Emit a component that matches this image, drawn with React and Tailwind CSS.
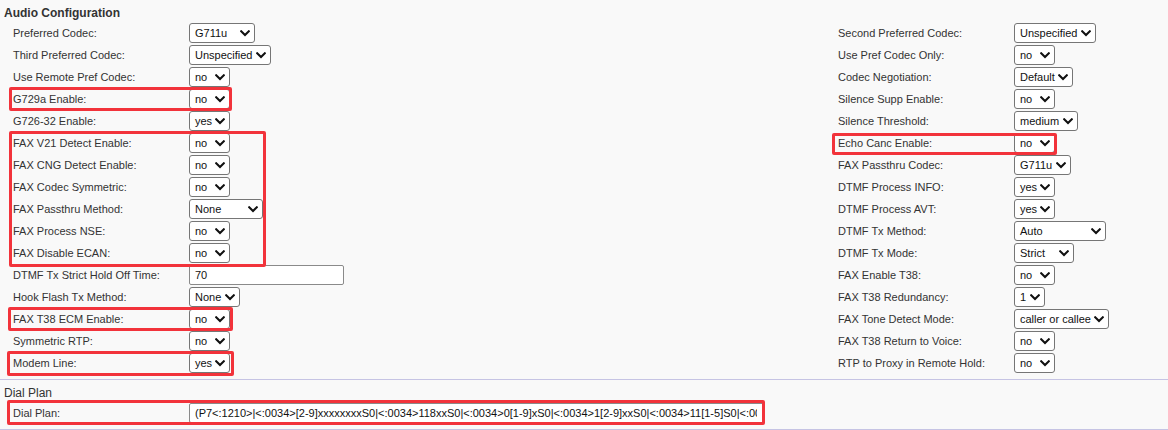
import React from "react";

const FONT = { fontFamily: '"Liberation Sans", Arial, sans-serif' };

function Chevron() {
  return (
    <svg width="10" height="7" viewBox="0 0 10 7" className="shrink-0">
      <path d="M1.2 1.3 L5 5 L8.8 1.3" fill="none" stroke="#111" strokeWidth="2.1" strokeLinecap="square" />
    </svg>
  );
}

function Select({ value, w }) {
  return (
    <div
      className={`flex h-[20px] items-center justify-between rounded-[3px] border border-[#767676] bg-white pl-[5px] pr-[4px] text-[11px] leading-[18px] text-[#111] ${w}`}
    >
      <span className="whitespace-nowrap">{value}</span>
      <Chevron />
    </div>
  );
}

function TextBox({ value, w }) {
  return (
    <input
      readOnly
      value={value}
      className={`h-[20px] rounded-[2px] border border-[#8a8a8a] bg-white px-[5px] text-[11px] leading-[18px] text-[#111] outline-none ${w}`}
    />
  );
}

const rows = [
  ["Preferred Codec:", { v: "G711u", w: "w-[66px]" }, "Second Preferred Codec:", { v: "Unspecified", w: "w-[82px]" }],
  ["Third Preferred Codec:", { v: "Unspecified", w: "w-[82px]" }, "Use Pref Codec Only:", { v: "no", w: "w-[41px]" }],
  ["Use Remote Pref Codec:", { v: "no", w: "w-[41px]" }, "Codec Negotiation:", { v: "Default", w: "w-[59px]" }],
  ["G729a Enable:", { v: "no", w: "w-[41px]" }, "Silence Supp Enable:", { v: "no", w: "w-[41px]" }],
  ["G726-32 Enable:", { v: "yes", w: "w-[41px]" }, "Silence Threshold:", { v: "medium", w: "w-[64px]" }],
  ["FAX V21 Detect Enable:", { v: "no", w: "w-[41px]" }, "Echo Canc Enable:", { v: "no", w: "w-[41px]" }],
  ["FAX CNG Detect Enable:", { v: "no", w: "w-[41px]" }, "FAX Passthru Codec:", { v: "G711u", w: "w-[57px]" }],
  ["FAX Codec Symmetric:", { v: "no", w: "w-[41px]" }, "DTMF Process INFO:", { v: "yes", w: "w-[41px]" }],
  ["FAX Passthru Method:", { v: "None", w: "w-[74px]" }, "DTMF Process AVT:", { v: "yes", w: "w-[41px]" }],
  ["FAX Process NSE:", { v: "no", w: "w-[41px]" }, "DTMF Tx Method:", { v: "Auto", w: "w-[92px]" }],
  ["FAX Disable ECAN:", { v: "no", w: "w-[41px]" }, "DTMF Tx Mode:", { v: "Strict", w: "w-[60px]" }],
  ["DTMF Tx Strict Hold Off Time:", { v: "70", w: "w-[155px]", input: true }, "FAX Enable T38:", { v: "no", w: "w-[41px]" }],
  ["Hook Flash Tx Method:", { v: "None", w: "w-[51px]" }, "FAX T38 Redundancy:", { v: "1", w: "w-[31px]" }],
  ["FAX T38 ECM Enable:", { v: "no", w: "w-[41px]" }, "FAX Tone Detect Mode:", { v: "caller or callee", w: "w-[95px]" }],
  ["Symmetric RTP:", { v: "no", w: "w-[41px]" }, "FAX T38 Return to Voice:", { v: "no", w: "w-[41px]" }],
  ["Modem Line:", { v: "yes", w: "w-[41px]" }, "RTP to Proxy in Remote Hold:", { v: "no", w: "w-[41px]" }],
];

function Label({ children }) {
  return <div className="whitespace-nowrap text-[11px] leading-[22px] text-[#333]">{children}</div>;
}

function Value({ spec }) {
  return (
    <div className="flex items-center">
      {spec.input ? <TextBox value={spec.v} w={spec.w} /> : <Select value={spec.v} w={spec.w} />}
    </div>
  );
}

const DIAL =
  "(P7<:1210>|<:0034>[2-9]xxxxxxxxS0|<:0034>118xxS0|<:0034>0[1-9]xS0|<:0034>1[2-9]xxS0|<:0034>11[1-5]S0|<:0034>00xx.|<:0034>xx.)";

export default function App() {
  return (
    <div className="relative h-[430px] w-[1168px] overflow-hidden bg-[#f9f9f9]" style={FONT}>
      <div className="h-[22px] pl-[4px] pt-[6px] text-[12px] font-bold leading-[14px] text-[#333]">
        Audio Configuration
      </div>

      <div className="grid auto-rows-[22px] grid-cols-[176px_649px_176px_1fr] pl-[13px]">
        {rows.map(([l1, v1, l2, v2]) => (
          <React.Fragment key={l1}>
            <Label>{l1}</Label>
            <Value spec={v1} />
            <Label>{l2}</Label>
            <Value spec={v2} />
          </React.Fragment>
        ))}
      </div>

      <div className="mt-[5px] border-t border-[#c6c4e4]">
        <div className="h-[22px] pl-[4px] pt-[4px] text-[12px] leading-[18px] text-[#333]">Dial Plan</div>
        <div className="grid h-[22px] grid-cols-[176px_1fr] pl-[13px]">
          <Label>Dial Plan:</Label>
          <div className="flex items-center">
            <input
              readOnly
              value={DIAL}
              className="h-[20px] w-[575px] rounded-[2px] border border-[#8a8a8a] bg-white pl-[5px] pr-[6px] text-[11px] leading-[18px] text-[#111] outline-none"
            />
          </div>
        </div>
        <div className="mt-[5px] border-t border-[#c6c4e4]" />
      </div>

      {/* annotation boxes */}
      <div className="pointer-events-none absolute left-[9px] top-[87px] h-[24px] w-[223px] rounded-[2px] border-[3px] border-[#f2333b]" />
      <div className="pointer-events-none absolute left-[9px] top-[131px] h-[136px] w-[257px] rounded-[2px] border-[3px] border-[#f2333b]" />
      <div className="pointer-events-none absolute left-[832px] top-[133px] h-[22px] w-[225px] rounded-[2px] border-[3px] border-[#f2333b]" />
      <div className="pointer-events-none absolute left-[8px] top-[307px] h-[24px] w-[225px] rounded-[2px] border-[3px] border-[#f2333b]" />
      <div className="pointer-events-none absolute left-[7px] top-[351px] h-[25px] w-[227px] rounded-[2px] border-[3px] border-[#f2333b]" />
      <div className="pointer-events-none absolute left-[7px] top-[400px] h-[25px] w-[758px] rounded-[2px] border-[3px] border-[#f2333b]" />
    </div>
  );
}
